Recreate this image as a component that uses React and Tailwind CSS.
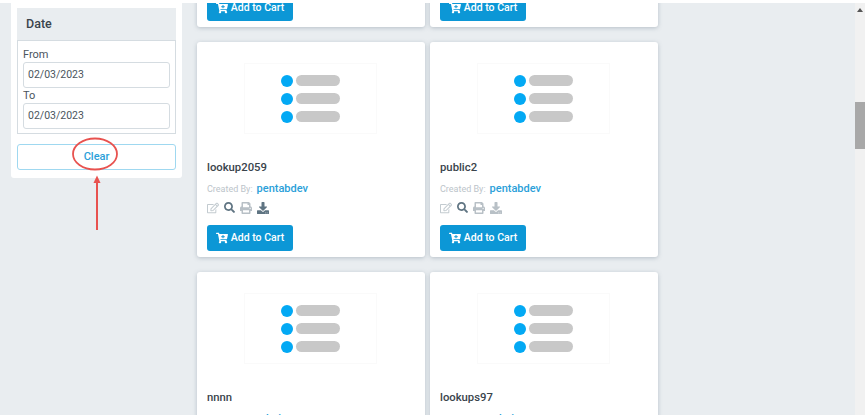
import { FaCartPlus, FaDownload, FaPrint, FaRegEdit, FaSearch } from 'react-icons/fa';

const ROWS = [
    [
        { id: 'a', name: 'lookup2058', by: 'pentabdev', dl: true },
        { id: 'b', name: 'public1', by: 'pentabdev', dl: false },
    ],
    [
        { id: 'c', name: 'lookup2059', by: 'pentabdev', dl: true },
        { id: 'd', name: 'public2', by: 'pentabdev', dl: false },
    ],
    [
        { id: 'e', name: 'nnnn', by: 'admin', dl: true },
        { id: 'f', name: 'lookups97', by: 'admin', dl: true },
    ],
];

function Thumb() {
    return (
        <div className="ml-[37px] flex h-[71px] w-[133px] flex-col items-center justify-center gap-[6px] border border-[#fafafa]">
            {[0, 1, 2].map((i) => (
                <div key={i} className="flex items-center gap-[3px]">
                    <span className="h-[12px] w-[12px] rounded-full bg-[#03a9f4]" />
                    <span className="h-[11px] w-[44px] rounded-[6px] bg-[#c8c8c8]" />
                </div>
            ))}
        </div>
    );
}

function Card({ item }) {
    return (
        <div className="flex h-[215px] w-[228px] shrink-0 flex-col rounded-[3px] bg-white px-[10px] pt-[21px] shadow-[0_1px_4px_rgba(90,110,125,0.35)]">
            <Thumb />
            <div className="mt-[26px] text-[11.3px] leading-[15px] font-medium text-[#3a444c]">{item.name}</div>
            <div className="mt-[8px] flex items-center gap-[4px] leading-[12px]">
                <span className="text-[9px] text-[#bcc4ca]">Created By:</span>
                <span className="text-[11px] font-medium text-[#2b9fd9]">{item.by}</span>
            </div>
            <div className="mt-[6px] flex h-[13px] items-center gap-[5px] text-[12px]">
                <FaRegEdit className="text-[#c3cbd0]" />
                <FaSearch className="text-[11px] text-[#5f7482]" />
                <FaPrint className="text-[#b8c0c6]" />
                <FaDownload className={item.dl ? 'text-[#5f7482]' : 'text-[#b8c0c6]'} />
            </div>
            <button className="mt-[11px] flex h-[26px] w-[86px] items-center justify-center gap-[3px] rounded-[3px] bg-[#0c97d6] text-[10.5px] font-medium text-white">
                <FaCartPlus className="text-[12px]" />
                Add to Cart
            </button>
        </div>
    );
}

function DateField({ label, value }) {
    return (
        <div>
            <div className="text-[11px] leading-[15px] text-[#4a545c]">{label}</div>
            <div className="flex h-[26px] items-center rounded-[3px] border border-[#d5dce1] px-[4px] text-[10.5px] text-[#4a545c]">
                {value}
            </div>
        </div>
    );
}

export default function App() {
    return (
        <div className="relative flex h-[419px] w-[868px] flex-col overflow-hidden bg-white font-['Roboto',sans-serif]">
            <div className="mt-[3px] flex h-[412px] w-[865px] overflow-hidden bg-[#e9edf0]">
                <aside className="ml-[11px] h-[175px] w-[171px] shrink-0 rounded-b-[3px] bg-white px-[6px] pt-[5px]">
                    <div className="flex h-[32px] items-center bg-[#e9edf0] px-[9px] text-[12.5px] font-medium text-[#3a444c]">Date</div>
                    <div className="flex h-[94px] flex-col border border-[#d5dce1] px-[5px] pt-[6px]">
                        <DateField label="From" value="02/03/2023" />
                        <DateField label="To" value="02/03/2023" />
                    </div>
                    <button className="mt-[10px] h-[26px] w-full rounded-[3px] border border-[#9fd8f0] text-[11px] font-medium text-[#2b9fd9]">Clear</button>
                </aside>

                <main className="ml-[15px] w-[461px] shrink-0">
                    <div className="mt-[-191px] flex flex-col gap-[15px]">
                        {ROWS.map((row) => (
                            <div key={row[0].id} className="flex gap-[5px]">
                                {row.map((item) => (
                                    <Card key={item.id} item={item} />
                                ))}
                            </div>
                        ))}
                    </div>
                </main>

                <div className="ml-auto flex h-full w-[10px] flex-col items-center bg-[#f1f1f1]">
                    <div className="mt-[5px] h-0 w-0 border-x-[3px] border-b-[4px] border-x-transparent border-b-[#555]" />
                    <div className="mt-[90px] h-[47px] w-full bg-[#a8a8a8]" />
                </div>
            </div>

            <svg className="pointer-events-none absolute top-0 left-0" width="868" height="419" fill="none">
                <ellipse cx="95" cy="154" rx="22" ry="15.5" stroke="#e8524f" strokeWidth="1.8" />
                <path d="M97 230V181" stroke="#e8524f" strokeWidth="2" />
                <path d="M93.5 183L97 175.5L100.5 183Z" fill="#e8524f" />
            </svg>
        </div>
    );
}
